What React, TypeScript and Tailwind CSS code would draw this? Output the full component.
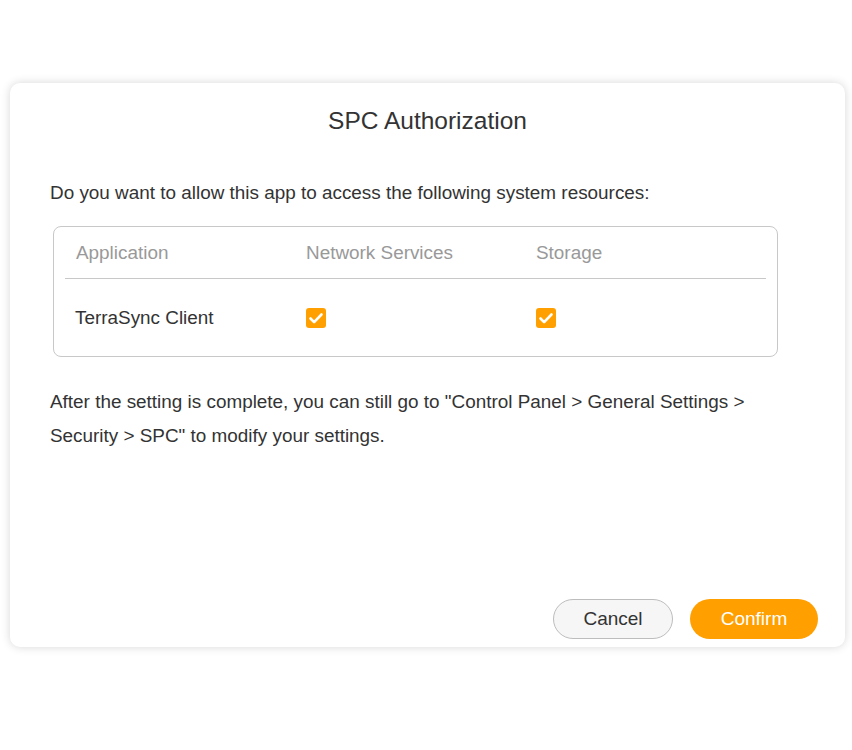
const columns = ["Application", "Network Services", "Storage"];

function OrangeCheck() {
  return (
    <span className="flex h-5 w-5 items-center justify-center rounded-[3px] bg-[#ff9f00]">
      <svg viewBox="0 0 20 20" className="h-5 w-5" aria-hidden="true">
        <path d="M4.5 10.5l3.6 3.6 7.4-7.6" fill="none" stroke="#fff" strokeWidth="2.6" strokeLinecap="round" strokeLinejoin="round" />
      </svg>
    </span>
  );
}

export default function App() {
  return (
    <div className="min-h-[750px] bg-white pl-[10px] pt-[83px] font-['Liberation_Sans',Arial,sans-serif] text-[#333]">
      <div className="flex h-[564px] w-[835px] flex-col rounded-[10px] bg-white shadow-[0_0_10px_rgba(0,0,0,0.16)]">
        <h1 className="pt-6 text-center text-[24.5px] leading-[28px] text-[#333]">SPC Authorization</h1>

        <p className="mt-[46px] pl-10 text-[18.9px] leading-6">
          Do you want to allow this app to access the following system resources:
        </p>

        <div className="ml-[43px] mt-[21px] h-[131px] w-[725px] rounded-[8px] border border-[#c8c8c8]">
          <div className="mx-[11px] flex border-b border-[#c8c8c8] pb-[13px] pl-[11px] pt-[14px] text-[18.9px] leading-6 text-[#999]">
            {columns.map((col) => (
              <div key={col} className="w-[230px]">
                {col}
              </div>
            ))}
          </div>
          <div className="mx-[11px] flex h-[77px] items-center pl-[10px] text-[18.9px] leading-6">
            <div className="w-[231px]">TerraSync Client</div>
            <div className="w-[230px]">
              <OrangeCheck />
            </div>
            <div className="w-[230px]">
              <OrangeCheck />
            </div>
          </div>
        </div>

        <p className="mt-[28px] w-[750px] pl-10 text-[18.9px] leading-[34px]">
          After the setting is complete, you can still go to "Control Panel &gt; General Settings &gt; Security &gt; SPC" to modify your settings.
        </p>

        <div className="mt-auto flex justify-end gap-[17px] pb-2 pr-[27px]">
          <button
            type="button"
            className="h-10 w-[120px] rounded-full border border-[#bdbdbd] bg-[#f6f6f6] text-[19px] text-[#333]"
          >
            Cancel
          </button>
          <button type="button" className="h-10 w-[128px] rounded-full bg-[#ff9f00] text-[19px] text-white">
            Confirm
          </button>
        </div>
      </div>
    </div>
  );
}
